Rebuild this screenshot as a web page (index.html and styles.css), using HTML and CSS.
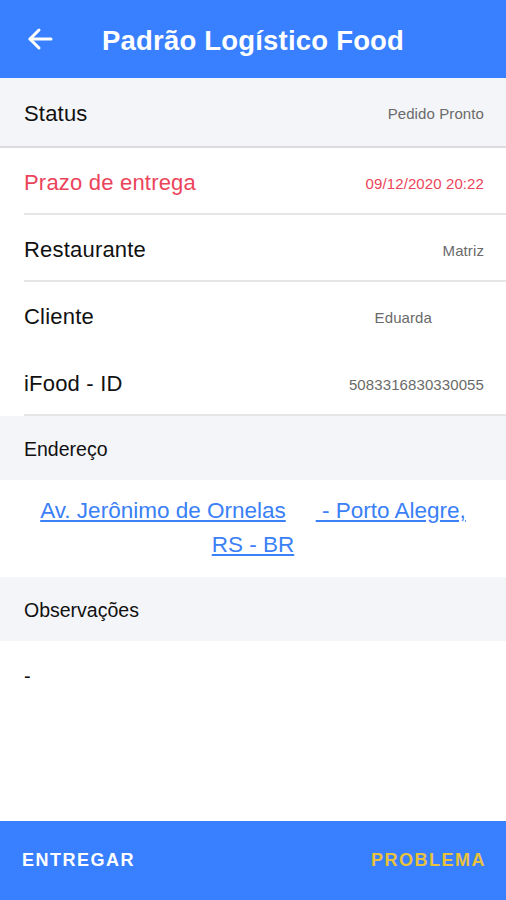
FILE: index.html
```html
<!DOCTYPE html>
<html lang="pt-BR">
<head>
  <meta charset="UTF-8" />
  <meta name="viewport" content="width=device-width, initial-scale=1.0" />
  <title>Padrão Logístico Food</title>
  <link rel="stylesheet" href="styles.css">
</head>
<body>
  <div class="app">
    <header class="toolbar">
      <button class="back-btn" aria-label="Voltar">
        <svg width="26" height="24" viewBox="0 0 26 24" fill="none" stroke="#fff" stroke-width="3" stroke-linecap="round" stroke-linejoin="round">
          <path d="M24 12H3" />
          <path d="M12 3L3 12l9 9" />
        </svg>
      </button>
      <h1 class="title">Padrão Logístico Food</h1>
    </header>

    <main class="content">
      <div class="item item-status">
        <span class="label">Status</span>
        <span class="value">Pedido Pronto</span>
      </div>
      <div class="item item-danger lined">
        <span class="label">Prazo de entrega</span>
        <span class="value">09/12/2020 20:22</span>
      </div>
      <div class="item lined">
        <span class="label">Restaurante</span>
        <span class="value">Matriz</span>
      </div>
      <div class="item">
        <span class="label">Cliente</span>
        <span class="value value-client">Eduarda</span>
      </div>
      <div class="item lined">
        <span class="label">iFood - ID</span>
        <span class="value">5083316830330055</span>
      </div>

      <div class="divider">Endereço</div>
      <p class="address">
        <a href="#">Av. Jerônimo de Ornelas</a><span class="gap"></span><a href="#">&nbsp;- Porto Alegre, RS - BR</a>
      </p>

      <div class="divider">Observações</div>
      <div class="notes">-</div>
    </main>

    <footer class="actions">
      <button class="action">ENTREGAR</button>
      <button class="action action-warning">PROBLEMA</button>
    </footer>
  </div>
</body>
</html>
```

FILE: styles.css
```css
* {
  box-sizing: border-box;
}
body {
  margin: 0;
  font-family: 'Liberation Sans', Arial, Helvetica, sans-serif;
  color: #111;
  background: #fff;
}
.app {
  height: 900px;
  display: flex;
  flex-direction: column;
}
.toolbar {
  height: 78px;
  background-color: #3880ff;
  display: flex;
  align-items: center;
  padding-left: 27px;
  flex-shrink: 0;
}
.back-btn {
  background: none;
  border: none;
  padding: 0;
  display: flex;
  margin-top: -1px;
}
.title {
  margin: 3px 0 0 49px;
  color: #fff;
  font-size: 27.5px;
  font-weight: bold;
  letter-spacing: 0.2px;
}
.content {
  flex: 1;
}
.item {
  height: 67px;
  display: flex;
  align-items: center;
  justify-content: space-between;
  padding: 3px 22px 0 24px;
  position: relative;
}
.item.lined::after {
  content: '';
  position: absolute;
  left: 24px;
  right: 0;
  bottom: 0;
  height: 2px;
  background: #e6e6e8;
}
.item-status {
  height: 70px;
  background-color: #f4f5f8;
  border-bottom: 2px solid #dcdcde;
}
.label {
  font-size: 22px;
  letter-spacing: 0.2px;
}
.value {
  font-size: 15px;
  color: #6a6a6a;
  letter-spacing: 0.1px;
}
.value-client {
  margin-right: 52px;
}
.item-danger .label,
.item-danger .value {
  color: #eb445a;
}
.divider {
  height: 64px;
  background-color: #f4f5f8;
  display: flex;
  align-items: center;
  padding: 2px 0 0 24px;
  font-size: 19.5px;
}
.address {
  margin: 0;
  height: 97px;
  padding: 14px 34px 0;
  font-size: 22.5px;
  line-height: 34px;
  text-align: center;
}
.address a {
  color: #3a80f6;
}
.address .gap {
  display: inline-block;
  width: 30px;
}
.notes {
  padding: 24px 24px;
  font-size: 20px;
}
.actions {
  height: 79px;
  background-color: #3880ff;
  display: flex;
  align-items: center;
  justify-content: space-between;
  padding: 0 20px 0 22px;
  flex-shrink: 0;
}
.action {
  background: none;
  border: none;
  padding: 0;
  color: #fff;
  font-family: inherit;
  font-size: 18px;
  font-weight: bold;
  letter-spacing: 1.5px;
}
.action-warning {
  color: #e8c23c;
}
```
